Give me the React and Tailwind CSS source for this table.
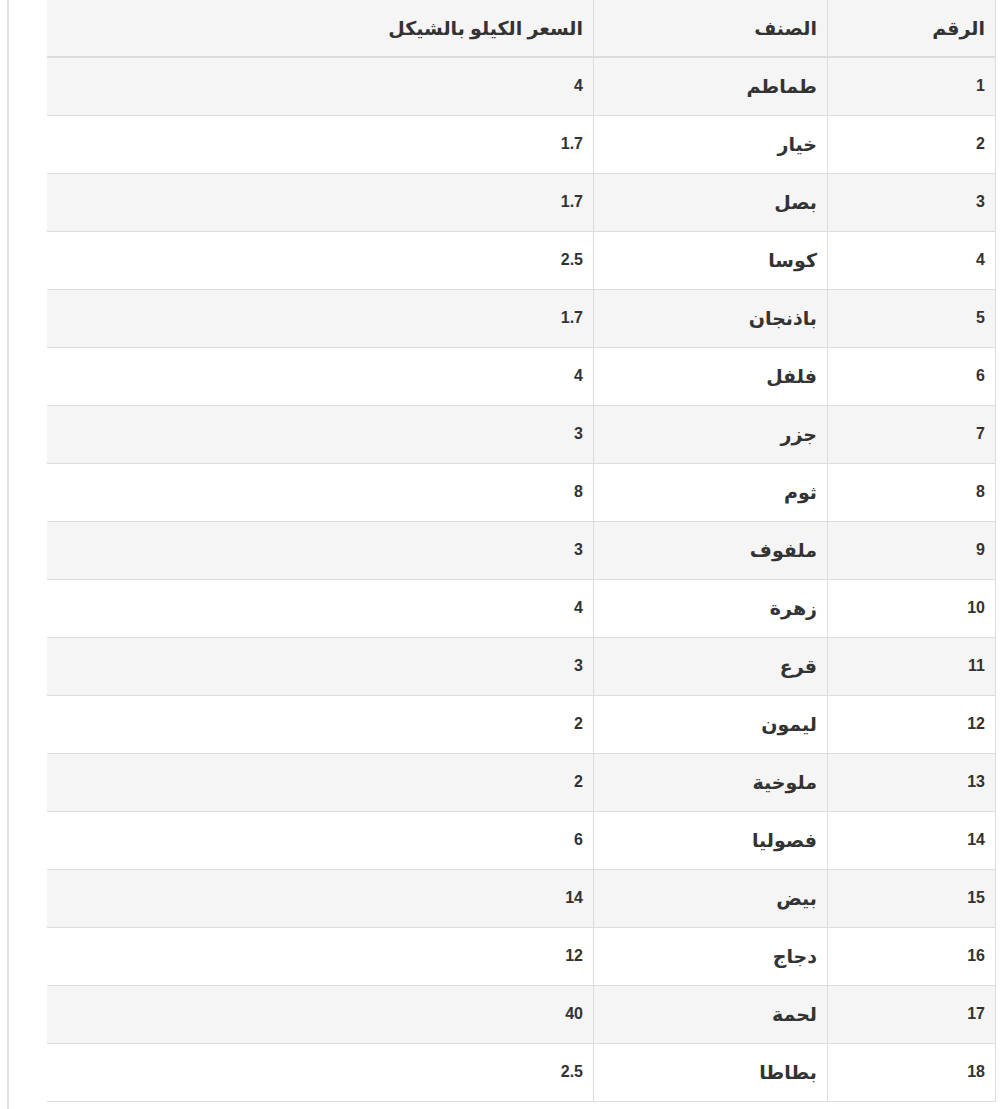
const rows = [
  [1, 'طماطم', '4'],
  [2, 'خيار', '1.7'],
  [3, 'بصل', '1.7'],
  [4, 'كوسا', '2.5'],
  [5, 'باذنجان', '1.7'],
  [6, 'فلفل', '4'],
  [7, 'جزر', '3'],
  [8, 'ثوم', '8'],
  [9, 'ملفوف', '3'],
  [10, 'زهرة', '4'],
  [11, 'قرع', '3'],
  [12, 'ليمون', '2'],
  [13, 'ملوخية', '2'],
  [14, 'فصوليا', '6'],
  [15, 'بيض', '14'],
  [16, 'دجاج', '12'],
  [17, 'لحمة', '40'],
  [18, 'بطاطا', '2.5'],
];

// arabic text reads larger than the digits in the original
const cell = 'border-r border-[#dddddd] pr-[10px] pl-2 text-right align-middle leading-none';
const lastCell = 'border-x border-l-0 border-[#dddddd] pr-[10px] pl-2 text-right align-middle leading-none';

export default function App() {
  return (
    <div
      className="min-h-[1109px] bg-white pl-[7px]"
      style={{ fontFamily: '"Liberation Sans", "DejaVu Sans", sans-serif' }}
    >
      <div className="min-h-[1109px] border-l-2 border-[#e2e2e2] pl-[38px] pr-[4px]">
        <table dir="rtl" className="w-[949px] table-fixed border-collapse font-bold text-[#333333]">
          <colgroup>
            <col className="w-[168px]" />
            <col className="w-[234px]" />
            <col />
          </colgroup>
          <thead>
            <tr className="h-[57px] border-b-2 border-[#dddddd] bg-[#f5f5f5] text-[19px]">
              <th className={cell}>الرقم</th>
              <th className={cell}>الصنف</th>
              <th className={lastCell}>السعر الكيلو بالشيكل</th>
            </tr>
          </thead>
          <tbody>
            {rows.map(([n, name, price], i) => (
              <tr
                key={n}
                className={`h-[58px] border-b border-[#dddddd] ${i % 2 === 0 ? 'bg-[#f5f5f5]' : 'bg-white'}`}
              >
                <td className={`${cell} text-[16px]`}>{n}</td>
                <td className={`${cell} text-[19px]`}>{name}</td>
                <td className={`${lastCell} text-[16px]`}>{price}</td>
              </tr>
            ))}
          </tbody>
        </table>
      </div>
    </div>
  );
}
